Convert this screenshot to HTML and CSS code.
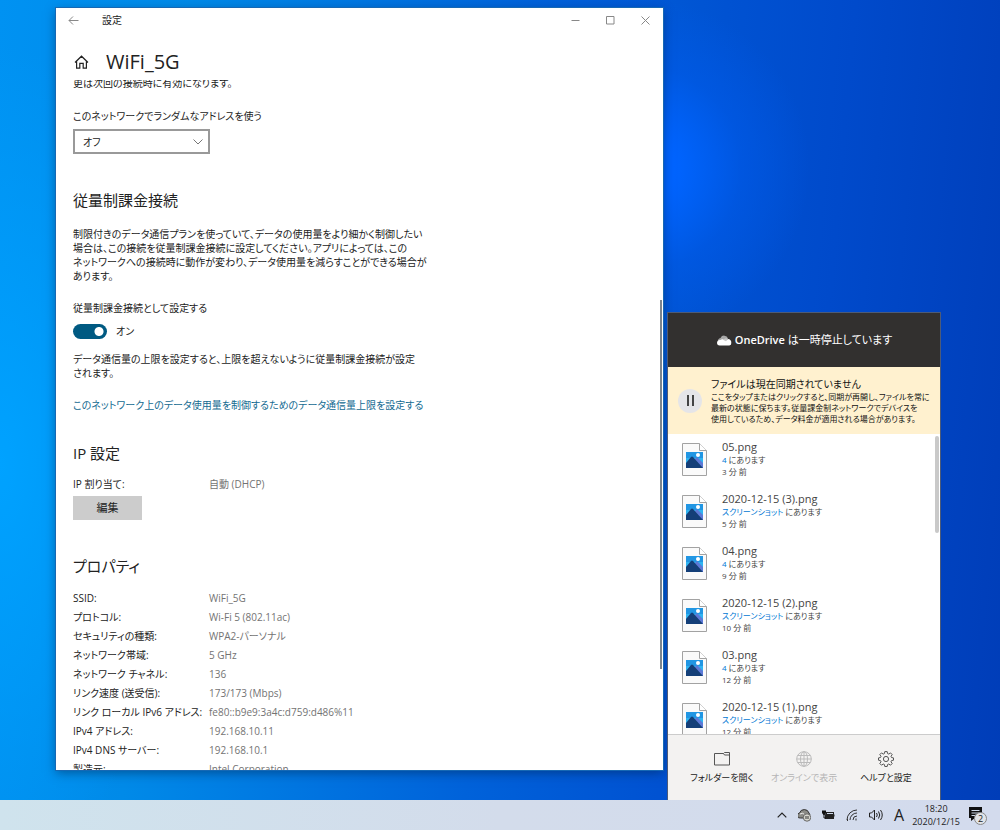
FILE: index.html
```html
<!DOCTYPE html>
<html lang="ja">
<head>
<meta charset="utf-8">
<meta name="viewport" content="width=device-width, initial-scale=1">
<title>設定</title>
<link rel="stylesheet" href="styles.css">
</head>
<body>
<svg class="sprite" aria-hidden="true">
  <symbol id="png-file" viewBox="0 0 25 33">
    <path d="M.5.5h17l7 7v25H.5z" fill="#fafafa" stroke="#a2a2a2"/>
    <path d="M17.500.5v7h7" fill="#fff" stroke="#a2a2a2"/>
    <path d="M4 9h17v8H4z" fill="#2196e3"/>
    <path d="M4 15h17v10H4z" fill="#2fb4f2"/>
    <path d="M12 17l3-3 6 6v5h-6z" fill="#5d79d6"/>
    <path d="M4 20l5-6q1-1 2 0l10 11H4z" fill="#143f78"/>
    <circle cx="16" cy="12" r="2" fill="#fff"/>
  </symbol>
</svg>
<div class="desktop">
  <main class="window">
    <header class="titlebar">
      <button class="icon-button" aria-label="戻る"><svg width="11" height="9" viewBox="0 0 11 9"><path d="M1 4.500h9.500M5 .5l-4 4 4 4"/></svg></button>
      <span class="window-name">設定</span>
      <div class="window-buttons">
        <button class="icon-button" aria-label="最小化"><svg width="9" height="9" viewBox="0 0 9 9"><path d="M.5 4.500h8"/></svg></button>
        <button class="icon-button" aria-label="最大化"><svg width="9" height="9" viewBox="0 0 9 9"><path d="M.5.5h7.500v7.500H.5z"/></svg></button>
        <button class="icon-button" aria-label="閉じる"><svg width="9" height="9" viewBox="0 0 9 9"><path d="M.5.5l8 8M8.500.5l-8 8"/></svg></button>
      </div>
    </header>
    <div class="page-head">
      <svg class="home" width="15" height="14" viewBox="0 0 15 14"><path d="M1 7.500l6.500-6.300L14 7.500M2.600 6.200v7h3.200V8.400h3.400v4.800h3.200v-7"/></svg>
      <h1>WiFi_5G</h1>
    </div>
    <div class="scroll">
      <div class="content">
        <p class="cut">更は次回の接続時に有効になります。</p>
        <label class="field-label" for="random">このネットワークでランダムなアドレスを使う</label>
        <div class="select-wrap">
          <select id="random"><option>オフ</option></select>
          <svg width="10" height="6" viewBox="0 0 10 6"><path d="M.5.5L5 5 9.500.5"/></svg>
        </div>
        <h2>従量制課金接続</h2>
        <p class="lead">制限付きのデータ通信プランを使っていて、データの使用量をより細かく制御したい<br>場合は、この接続を従量制課金接続に設定してください。アプリによっては、この<br>ネットワークへの接続時に動作が変わり、データ使用量を減らすことができる場合が<br>あります。</p>
        <label class="field-label metered" for="metered">従量制課金接続として設定する</label>
        <div class="toggle-row"><input class="toggle" type="checkbox" role="switch" id="metered" checked><span>オン</span></div>
        <p class="note">データ通信量の上限を設定すると、上限を超えないように従量制課金接続が設定<br>されます。</p>
        <a class="link" href="#">このネットワーク上のデータ使用量を制御するためのデータ通信量上限を設定する</a>
        <h2 class="ip">IP 設定</h2>
        <dl><dt>IP 割り当て:</dt><dd>自動 (DHCP)</dd></dl>
        <button class="edit">編集</button>
        <h2 class="props">プロパティ</h2>
        <dl>
          <dt>SSID:</dt><dd>WiFi_5G</dd>
          <dt>プロトコル:</dt><dd>Wi-Fi 5 (802.11ac)</dd>
          <dt>セキュリティの種類:</dt><dd>WPA2-パーソナル</dd>
          <dt>ネットワーク帯域:</dt><dd>5 GHz</dd>
          <dt>ネットワーク チャネル:</dt><dd>136</dd>
          <dt>リンク速度 (送受信):</dt><dd>173/173 (Mbps)</dd>
          <dt>リンク ローカル IPv6 アドレス:</dt><dd>fe80::b9e9:3a4c:d759:d486%11</dd>
          <dt>IPv4 アドレス:</dt><dd>192.168.10.11</dd>
          <dt>IPv4 DNS サーバー:</dt><dd>192.168.10.1</dd>
          <dt>製造元:</dt><dd>Intel Corporation</dd>
        </dl>
      </div>
      <div class="scroll-thumb"></div>
    </div>
  </main>

  <section class="flyout" aria-label="OneDrive">
    <header class="drive-head">
      <svg width="16" height="11" viewBox="0 0 16 11"><path d="M2 7a3 3 0 0 1 2.500-4A4 4 0 0 1 12 3.500L9 7z" fill="#a8a8a8"/><path d="M1 8.200A3 3 0 0 1 4.500 5l2-1 3 1.500L12 4a3.500 3.500 0 0 1 3.300 4 2.300 2.300 0 0 1-2 2.500H3.500A2.600 2.600 0 0 1 1 8.200z" fill="#fff"/><path d="M6 4.300l4 2 2-2.300q-2-1.500-4 0z" fill="#c8c8c8"/></svg>
      <span><b>OneDrive</b> は一時停止しています</span>
    </header>
    <div class="banner">
      <button class="pause" aria-label="同期を再開"><svg width="7" height="11" viewBox="0 0 7 11"><path d="M0 0h2v11H0zM5 0h2v11H5z" fill="#444"/></svg></button>
      <div class="banner-text">
        <strong>ファイルは現在同期されていません</strong>
        <p>ここをタップまたはクリックすると、同期が再開し、ファイルを常に<br>最新の状態に保ちます。従量課金制ネットワークでデバイスを<br>使用しているため、データ料金が適用される場合があります。</p>
      </div>
    </div>
    <div class="files">
      <ul>
        <li><svg><use href="#png-file"/></svg><div><h3>05.png</h3><p><a href="#">4</a> にあります</p><small>3 分 前</small></div></li>
        <li><svg><use href="#png-file"/></svg><div><h3>2020-12-15 (3).png</h3><p><a href="#">スクリーンショット</a> にあります</p><small>5 分 前</small></div></li>
        <li><svg><use href="#png-file"/></svg><div><h3>04.png</h3><p><a href="#">4</a> にあります</p><small>9 分 前</small></div></li>
        <li><svg><use href="#png-file"/></svg><div><h3>2020-12-15 (2).png</h3><p><a href="#">スクリーンショット</a> にあります</p><small>10 分 前</small></div></li>
        <li><svg><use href="#png-file"/></svg><div><h3>03.png</h3><p><a href="#">4</a> にあります</p><small>12 分 前</small></div></li>
        <li><svg><use href="#png-file"/></svg><div><h3>2020-12-15 (1).png</h3><p><a href="#">スクリーンショット</a> にあります</p><small>12 分 前</small></div></li>
      </ul>
      <div class="files-thumb"></div>
    </div>
    <footer class="actions">
      <button><svg width="16" height="16" viewBox="0 0 16 16"><path d="M.5 2.500h9l1-1h5v12.500H.5zM9.500 2.500l1 1.500h5"/></svg>フォルダーを開く</button>
      <button disabled><svg width="16" height="16" viewBox="0 0 16 16"><circle cx="8" cy="8" r="7.300"/><ellipse cx="8" cy="8" rx="3.500" ry="7.300"/><path d="M8 .7v14.600M.7 8h14.600M1.700 4.500h12.600M1.700 11.500h12.600"/></svg>オンラインで表示</button>
      <button><svg width="16" height="16" viewBox="0 0 16 16"><circle cx="8" cy="8" r="2.600"/><path d="M6.800.6h2.400l.4 2 1.200.5 1.700-1.200 1.700 1.700-1.200 1.700.5 1.200 2 .4v2.300l-2 .4-.5 1.200 1.200 1.700-1.700 1.700-1.700-1.200-1.200.5-.4 2H6.800l-.4-2-1.200-.5-1.700 1.200-1.700-1.700L3 10.800l-.5-1.200-2-.4V6.900l2-.4L3 5.300 1.800 3.600l1.700-1.700 1.700 1.200 1.200-.5z"/></svg>ヘルプと設定</button>
    </footer>
  </section>
</div>

<footer class="taskbar">
  <div class="tray">
    <svg width="10" height="6" viewBox="0 0 10 6"><path d="M.7 5.300L5 1l4.300 4.300" fill="none" stroke="#222" stroke-width="1.200"/></svg>
    <svg width="13" height="13" viewBox="0 0 13 13"><path d="M2.500 9A2.500 2.500 0 0 1 1.500 4 5 5 0 0 1 11 4l1 2H6v3z" fill="#8b8b86" stroke="#333"/><path d="M2 5q3-2 5 1" stroke="#eee" fill="none"/><circle cx="9" cy="8.500" r="3.700" fill="#d8d8cf" stroke="#666"/><path d="M8 7v3M10 7v3" stroke="#333"/></svg>
    <svg width="13" height="10" viewBox="0 0 13 10"><path d="M4 2h8v7H3V5z" fill="#222"/><path d="M5 3.500h6M12 4h1v3h-1" stroke="#ccd7e7" fill="#222"/><path d="M0 .5h4v2.500L2.500 5H1.500L0 3z" fill="#111"/><path d="M2 4v4h2" stroke="#111" fill="none"/></svg>
    <svg width="12" height="12" viewBox="0 0 12 12" fill="none" stroke="#333"><path d="M1 11A10 10 0 0 1 11 1M4 11a7 7 0 0 1 7-7M7 11a4 4 0 0 1 4-4"/><path d="M1 11h1M9.500 10.500h1" stroke-width="2"/></svg>
    <svg width="14" height="12" viewBox="0 0 14 12" fill="none" stroke="#222"><path d="M.5 4h2l3-3v10l-3-3h-2zM7.500 4q1.500 2 0 4M9.500 2.500q2.500 3.500 0 7M11.500 1q3.500 5 0 10"/></svg>
    <span class="ime">A</span>
  </div>
  <time>18:20<br>2020/12/15</time>
  <button class="notices" aria-label="通知 2"><svg width="15" height="14" viewBox="0 0 15 14"><path d="M1 0h13v11H7l-4 3v-3H1z" fill="#111"/><path d="M3.500 3.500h8M3.500 6h8M3.500 8.500h5" stroke="#ccd7e7"/></svg><span>2</span></button>
</footer>
</body>
</html>
```
FILE: styles.css
```css
* { box-sizing: border-box; margin: 0; padding: 0; }
html, body { height: 100%; }
body {
  display: flex;
  flex-direction: column;
  overflow: hidden;
  font: 11px/14px "Open Sans", "Noto Sans CJK JP", sans-serif;
  font-feature-settings: "palt";
  color: #222;
}
button, select, input { font: inherit; color: inherit; font-feature-settings: inherit; }
button { border: 0; background: none; }
a { text-decoration: none; }
svg { flex: none; }
.sprite { display: none; }

.desktop {
  position: relative;
  flex: 1;
  background:
    radial-gradient(ellipse 170px 170px at 64% 21%, #0064ff 20%, #005cee80 60%, #0050dc00),
    radial-gradient(ellipse 180px 420px at 0 58%, #00a2ff, #00a2ff00),
    linear-gradient(95deg, #0092f2 0%, #008ae8 18%, #0062da 50%, #0052d2 68%, #004acb 80%, #003db8 100%);
}

.window {
  position: absolute;
  top: 8px;
  left: 56px;
  right: 337px;
  bottom: 30px;
  display: flex;
  flex-direction: column;
  background: #fff;
  box-shadow: 0 0 0 1px #1668b4, 0 3px 10px #00224880;
}
.titlebar { display: flex; align-items: center; height: 24px; padding-left: 6px; }
.icon-button { display: grid; place-items: center; width: 22px; height: 24px; }
.titlebar svg { fill: none; stroke: #888; }
.window-name { margin-left: 18px; font-size: 10px; }
.window-buttons { display: flex; margin-left: auto; }
.window-buttons .icon-button { width: 35px; }
.page-head { display: flex; align-items: center; gap: 17px; height: 48px; padding: 12px 18px 0; }
.home { fill: none; stroke: #222; stroke-width: 1.200; }
h1 { font-size: 20px; line-height: 24px; font-weight: 400; }

.scroll { position: relative; flex: 1; min-height: 0; overflow: hidden; }
.content { display: flex; flex-direction: column; align-items: flex-start; padding-left: 17px; }
.scroll-thumb { position: absolute; top: 220px; right: 1px; width: 2px; height: 369px; background: #7c858e; }
.content p, .field-label, .link { font-size: 10px; }
.cut { margin-top: -4px; }
.field-label { display: block; margin-top: 19px; }
.select-wrap { position: relative; width: 137px; margin-top: 6px; }
select {
  display: block;
  appearance: none;
  width: 100%;
  height: 25px;
  padding-left: 8px;
  border: 2px solid #999;
  border-radius: 0;
  background: #fff;
  font-size: 10px;
}
.select-wrap svg { position: absolute; right: 7px; top: 10px; fill: none; stroke: #777; pointer-events: none; }
h2 { margin-top: 36px; font-size: 15px; line-height: 20px; font-weight: 400; }
.lead { margin-top: 17px; }
.field-label.metered { margin-top: 18px; }
.toggle-row { display: flex; align-items: center; gap: 9px; height: 16px; margin-top: 8px; }
.toggle { appearance: none; width: 34px; height: 15px; border-radius: 8px; background: radial-gradient(circle at 26px 50%, #fff 4px, #005a82 5px); }
.toggle-row span { font-size: 10px; }
.note { margin-top: 13px; }
.link { margin-top: 18px; color: #136a91; }
.ip { margin-top: 31px; }
dl { display: grid; grid-template-columns: 136px auto; line-height: 19px; margin-top: 12px; font-size: 10px; }
dt { white-space: nowrap; }
dd { color: #737373; }
.edit { width: 69px; height: 24px; margin-top: 2px; background: #ccc; }
.props + dl { margin-top: 13px; }

.flyout {
  position: absolute;
  right: 59px;
  bottom: 0;
  width: 274px;
  border: 1px solid #4d5b78;
  border-bottom: 0;
  background: #fff;
}
.drive-head { display: flex; align-items: center; justify-content: center; gap: 3px; height: 54px; background: #32302f; color: #fff; }
.drive-head b { font-weight: 600; }
.banner { display: flex; align-items: center; height: 67px; padding: 0 10px; gap: 9px; background: #fff1cf; color: #111; }
.pause { display: grid; place-items: center; width: 24px; height: 24px; flex: none; border-radius: 50%; background: #e5e5e8; }
.banner-text strong { display: block; font-size: 10px; line-height: 13px; font-weight: 400; }
.banner-text { white-space: nowrap; }
.banner-text p { font-size: 8px; line-height: 11px; }
.files { position: relative; height: 300px; overflow: hidden; }
.files-thumb { position: absolute; top: 2px; right: 1px; width: 4px; height: 97px; border-radius: 2px; background: #c9c9c9; }
ul { list-style: none; }
li { display: flex; gap: 15px; height: 52px; padding: 6px 14px 0; }
li svg { width: 25px; height: 33px; margin-top: 3px; }
h3 { font-size: 11px; line-height: 14px; font-weight: 400; color: #444; }
li p { font-size: 8px; line-height: 12px; color: #444; }
li a { color: #0078d4; }
li small { display: block; font-size: 8px; line-height: 11px; color: #444; }
.actions { display: grid; grid-template-columns: repeat(3, 82px); justify-content: center; height: 66px; border-top: 1px solid #ccc; background: #f3f2f1; }
.actions button { display: flex; flex-direction: column; align-items: center; justify-content: center; gap: 4px; font-size: 9px; white-space: nowrap; }
.actions svg { fill: none; stroke: #555; }
.actions button:disabled { color: #b5b5b5; }
.actions button:disabled svg { stroke: #bbb; }

.taskbar { display: flex; align-items: center; justify-content: flex-end; gap: 8px; height: 30px; padding-right: 12px; background: linear-gradient(90deg, #cfe3ed, #d3dceb 50%, #d3dbed); }
.tray { display: flex; align-items: center; gap: 11px; }
.ime { font-size: 16px; line-height: 20px; }
time { font-size: 9px; line-height: 13px; text-align: center; }
.notices { position: relative; width: 20px; height: 20px; }
.notices svg { position: absolute; left: 0; top: 2px; }
.notices span { position: absolute; left: 6px; top: 7px; width: 13px; height: 13px; border: 1px solid #888; border-radius: 50%; background: #e1e4e8; font-size: 9px; line-height: 11px; }
```
